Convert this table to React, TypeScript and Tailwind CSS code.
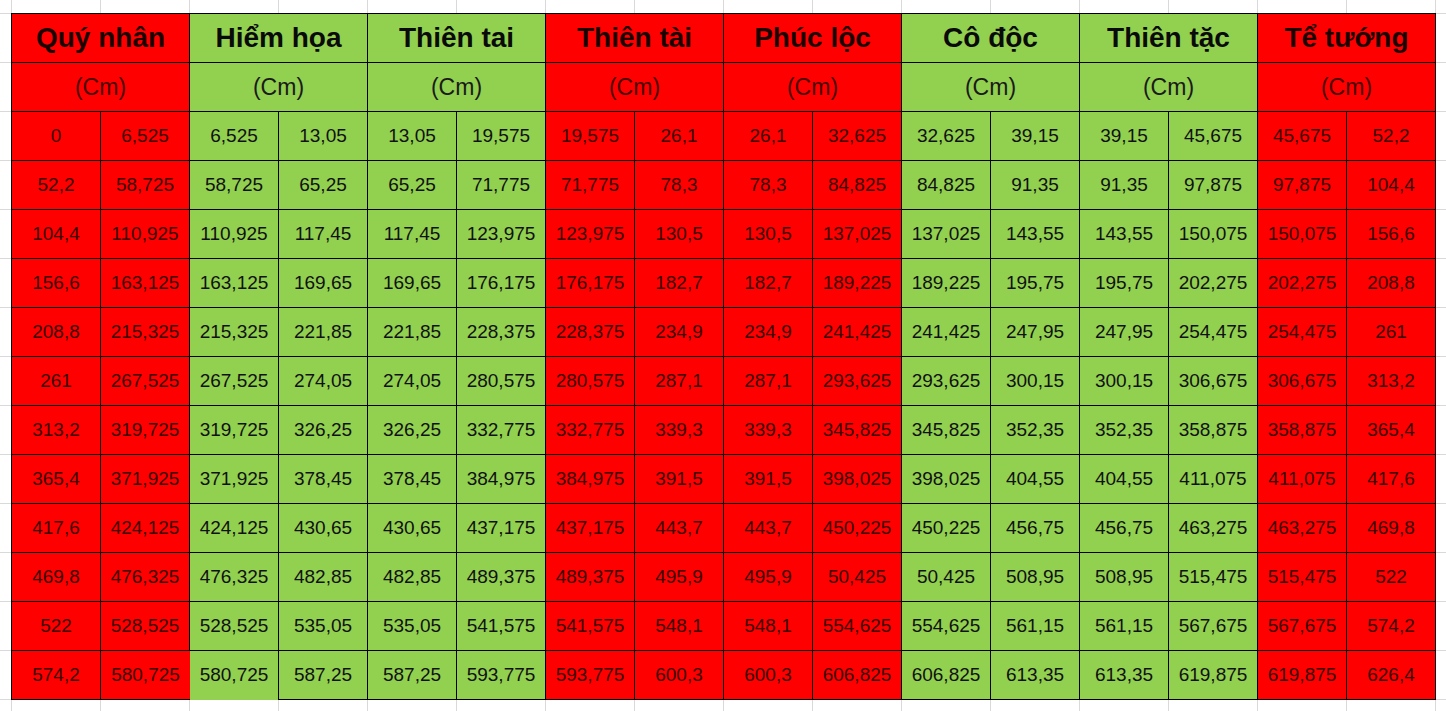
const groups = [
  { name: 'Quý nhân', red: true },
  { name: 'Hiểm họa', red: false },
  { name: 'Thiên tai', red: false },
  { name: 'Thiên tài', red: true },
  { name: 'Phúc lộc', red: true },
  { name: 'Cô độc', red: false },
  { name: 'Thiên tặc', red: false },
  { name: 'Tể tướng', red: true },
]

// copied as-is from the sheet, typos included (50,425)
const rows = [
  '0 6,525 6,525 13,05 13,05 19,575 19,575 26,1 26,1 32,625 32,625 39,15 39,15 45,675 45,675 52,2',
  '52,2 58,725 58,725 65,25 65,25 71,775 71,775 78,3 78,3 84,825 84,825 91,35 91,35 97,875 97,875 104,4',
  '104,4 110,925 110,925 117,45 117,45 123,975 123,975 130,5 130,5 137,025 137,025 143,55 143,55 150,075 150,075 156,6',
  '156,6 163,125 163,125 169,65 169,65 176,175 176,175 182,7 182,7 189,225 189,225 195,75 195,75 202,275 202,275 208,8',
  '208,8 215,325 215,325 221,85 221,85 228,375 228,375 234,9 234,9 241,425 241,425 247,95 247,95 254,475 254,475 261',
  '261 267,525 267,525 274,05 274,05 280,575 280,575 287,1 287,1 293,625 293,625 300,15 300,15 306,675 306,675 313,2',
  '313,2 319,725 319,725 326,25 326,25 332,775 332,775 339,3 339,3 345,825 345,825 352,35 352,35 358,875 358,875 365,4',
  '365,4 371,925 371,925 378,45 378,45 384,975 384,975 391,5 391,5 398,025 398,025 404,55 404,55 411,075 411,075 417,6',
  '417,6 424,125 424,125 430,65 430,65 437,175 437,175 443,7 443,7 450,225 450,225 456,75 456,75 463,275 463,275 469,8',
  '469,8 476,325 476,325 482,85 482,85 489,375 489,375 495,9 495,9 50,425 50,425 508,95 508,95 515,475 515,475 522',
  '522 528,525 528,525 535,05 535,05 541,575 541,575 548,1 548,1 554,625 554,625 561,15 561,15 567,675 567,675 574,2',
  '574,2 580,725 580,725 587,25 587,25 593,775 593,775 600,3 600,3 606,825 606,825 613,35 613,35 619,875 619,875 626,4',
].map((r) => r.split(' '))

const RED = 'bg-[#ff0000] text-[#3a0000]'
const GREEN = 'bg-[#92d050] text-[#111]'

export default function App() {
  const last = rows.length - 1
  return (
    <div
      className="h-[711px] w-[1446px] overflow-hidden bg-white bg-[linear-gradient(to_right,#d9d9d9_1px,transparent_1px),linear-gradient(to_bottom,#d9d9d9_1px,transparent_1px)] bg-[size:89px_49px] bg-[position:11px_13px] pl-[11px] pt-[13px]"
      style={{ fontFamily: '"Liberation Sans", Arial, sans-serif' }}
    >
      <div className="grid w-[1425px] grid-cols-[repeat(16,89px)] grid-rows-[repeat(14,49px)] border-l border-t border-black">
        {groups.map((g) => (
          <div
            key={g.name}
            className={`col-span-2 flex items-center justify-center border-b border-r border-black text-[28px] font-bold ${
              g.red ? 'bg-[#ff0000] text-[#1a0000]' : 'bg-[#92d050] text-[#0a0a0a]'
            }`}
          >
            {g.name}
          </div>
        ))}
        {groups.map((g) => (
          <div
            key={g.name + '-unit'}
            className={`col-span-2 flex items-center justify-center border-b border-r border-black text-[23px] ${
              g.red ? 'bg-[#ff0000] text-[#4a0000]' : 'bg-[#92d050] text-[#1a1a1a]'
            }`}
          >
            (Cm)
          </div>
        ))}
        {rows.map((row, ri) =>
          row.map((v, ci) => {
            const red = groups[Math.floor(ci / 2)].red
            // the sheet lost two borders around the bottom 580,725 cell
            const noRight = ri === last && ci === 1
            const noBottom = ri === last && ci === 2
            return (
              <div
                key={`${ri}-${ci}`}
                className={`flex items-center justify-center border-black text-[19px] ${red ? RED : GREEN} ${
                  noRight ? '' : 'border-r'
                } ${noBottom ? '' : 'border-b'}`}
              >
                {v}
              </div>
            )
          })
        )}
      </div>
    </div>
  )
}
